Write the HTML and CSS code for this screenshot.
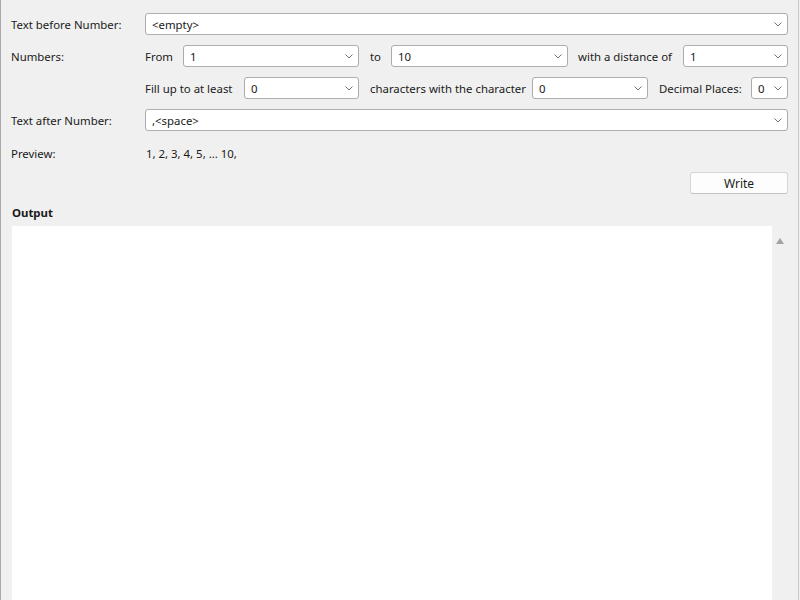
FILE: index.html
```html
<!DOCTYPE html>
<html>
<head>
  <title>Number Writer</title>
  <link rel="stylesheet" href="styles.css">
</head>
<body>
<div class="window">
  <div class="form">
    <div class="row">
      <span class="label">Text before Number:</span>
      <div class="combo grow"><span>&lt;empty&gt;</span><svg class="chev" width="8" height="5" viewBox="0 0 8 5"><polyline points="0.5,0.5 4,4 7.5,0.5" /></svg></div>
    </div>
    <div class="row">
      <span class="label">Numbers:</span>
      <span class="txt w-from">From</span>
      <div class="combo w-176"><span>1</span><svg class="chev" width="8" height="5" viewBox="0 0 8 5"><polyline points="0.5,0.5 4,4 7.5,0.5" /></svg></div>
      <span class="txt w-to">to</span>
      <div class="combo w-177"><span>10</span><svg class="chev" width="8" height="5" viewBox="0 0 8 5"><polyline points="0.5,0.5 4,4 7.5,0.5" /></svg></div>
      <span class="txt w-dist">with a distance of</span>
      <div class="combo grow"><span>1</span><svg class="chev" width="8" height="5" viewBox="0 0 8 5"><polyline points="0.5,0.5 4,4 7.5,0.5" /></svg></div>
    </div>
    <div class="row">
      <span class="label"></span>
      <span class="txt w-fill">Fill up to at least</span>
      <div class="combo w-115"><span>0</span><svg class="chev" width="8" height="5" viewBox="0 0 8 5"><polyline points="0.5,0.5 4,4 7.5,0.5" /></svg></div>
      <span class="txt w-chars">characters with the character</span>
      <div class="combo w-116"><span>0</span><svg class="chev" width="8" height="5" viewBox="0 0 8 5"><polyline points="0.5,0.5 4,4 7.5,0.5" /></svg></div>
      <span class="txt w-dec">Decimal Places:</span>
      <div class="combo grow"><span>0</span><svg class="chev" width="8" height="5" viewBox="0 0 8 5"><polyline points="0.5,0.5 4,4 7.5,0.5" /></svg></div>
    </div>
    <div class="row">
      <span class="label">Text after Number:</span>
      <div class="combo grow"><span>,&lt;space&gt;</span><svg class="chev" width="8" height="5" viewBox="0 0 8 5"><polyline points="0.5,0.5 4,4 7.5,0.5" /></svg></div>
    </div>
    <div class="row preview">
      <span class="label">Preview:</span>
      <span class="txt">1, 2, 3, 4, 5, ... 10,</span>
    </div>
    <div class="row actions">
      <button class="btn">Write</button>
    </div>
    <div class="section-title">Output</div>
  </div>
  <div class="output">
    <div class="output-text"></div>
    <div class="scrollbar">
      <svg class="arrow" width="8" height="6" viewBox="0 0 8 6"><polygon points="4,0 8,6 0,6" /></svg>
    </div>
  </div>
</div>
</body>
</html>
```

FILE: styles.css
```css
html, body {
  margin: 0;
  padding: 0;
  background: #f0f0f0;
}
body {
  font-family: "Noto Sans", "Open Sans", sans-serif;
  font-size: 11.4px;
  color: #1a1a1a;
}
.window {
  width: 799px;
  height: 600px;
  box-sizing: border-box;
  border-left: 1px solid #a9a9a9;
  border-right: 1px solid #c8c8c8;
  display: flex;
  flex-direction: column;
  overflow: hidden;
}
.form {
  padding: 13px 10px 0 10px;
}
.row {
  display: flex;
  align-items: center;
  height: 22px;
  margin-bottom: 10px;
}
.label {
  width: 134px;
  flex: none;
}
.txt {
  flex: none;
  box-sizing: border-box;
  white-space: nowrap;
}
.w-from { width: 38px; }
.w-to { width: 32px; padding-left: 11px; }
.w-dist { width: 115px; padding-left: 10px; }
.w-fill { width: 99px; }
.w-chars { width: 173px; padding-left: 11px; }
.w-dec { width: 103px; padding-left: 11px; }
.combo {
  height: 22px;
  box-sizing: border-box;
  border: 1px solid #adadad;
  border-radius: 3px;
  background: #fff;
  display: flex;
  align-items: center;
  padding: 0 5px 0 6px;
  flex: none;
}
.combo span {
  flex: 1;
  white-space: nowrap;
}
.combo.grow { flex: 1; }
.w-176 { width: 176px; }
.w-177 { width: 177px; }
.w-115 { width: 115px; }
.w-116 { width: 116px; }
.chev polyline {
  fill: none;
  stroke: #707070;
  stroke-width: 1;
}
.preview {
  margin-top: 11px;
  margin-bottom: 8px;
}
.preview .txt {
  padding-left: 1px;
}
.actions {
  justify-content: flex-end;
  margin-bottom: 0;
}
.btn {
  width: 98px;
  height: 22px;
  font-family: inherit;
  font-size: 12px;
  color: #1a1a1a;
  background: #fdfdfd;
  border: 1px solid #d6d6d6;
  border-bottom-color: #c4c4c4;
  border-radius: 3px;
  padding: 0;
}
.section-title {
  font-weight: bold;
  margin-top: 11px;
  line-height: 16px;
  height: 16px;
  padding-left: 1px;
}
.output {
  flex: 1;
  display: flex;
  margin-top: 5px;
  margin-left: 11px;
}
.output-text {
  flex: 1;
  background: #fff;
}
.scrollbar {
  width: 26px;
  background: #f0f0f0;
  padding: 6px 0 0 4px;
  box-sizing: border-box;
}
.arrow polygon {
  fill: #a3a3a3;
}
```
